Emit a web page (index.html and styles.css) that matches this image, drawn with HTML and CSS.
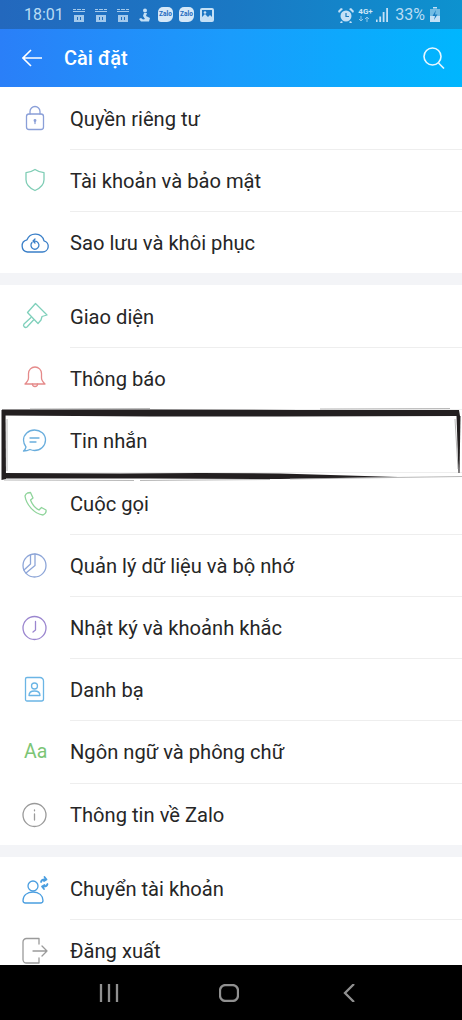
FILE: index.html
```html
<!DOCTYPE html>
<html lang="vi">
<head>
    <meta charset="UTF-8">
    <title>Cài đặt</title>
    <link rel="stylesheet" href="styles.css">
</head>
<body>
<div class="page">
    <div class="statusbar">
        <div class="status-left">
            <span class="clock">18:01</span>
            <svg class="st st-msg" viewBox="0 0 12 14"><path d="M0 1h3v1H0zM4 1h4v1H4zM9 1h3v1H9zM0 3h12v1H0z" opacity=".8"/><path fill-rule="evenodd" d="M1 7h10v7H1zm3 2v3h1V9zm3 0v3h1V9z" opacity=".8"/></svg>
            <svg class="st st-msg" viewBox="0 0 12 14"><path d="M0 1h3v1H0zM4 1h4v1H4zM9 1h3v1H9zM0 3h12v1H0z" opacity=".8"/><path fill-rule="evenodd" d="M1 7h10v7H1zm3 2v3h1V9zm3 0v3h1V9z" opacity=".8"/></svg>
            <svg class="st st-msg" viewBox="0 0 12 14"><path d="M0 1h3v1H0zM4 1h4v1H4zM9 1h3v1H9zM0 3h12v1H0z" opacity=".8"/><path fill-rule="evenodd" d="M1 7h10v7H1zm3 2v3h1V9zm3 0v3h1V9z" opacity=".8"/></svg>
            <svg class="st st-anchor" viewBox="0 0 11 14"><circle cx="6" cy="2.500" r="2"/><path d="M5 5h3L7 8l4 2-1 3.500H2L0 11l2-1 2 1.500L6 11 4 8z"/></svg>
            <span class="zalo">Zalo</span>
            <span class="zalo">Zalo</span>
            <svg class="st st-pic" viewBox="0 0 14 14"><path fill-rule="evenodd" d="M2 0h10a2 2 0 0 1 2 2v10a2 2 0 0 1-2 2H2a2 2 0 0 1-2-2V2a2 2 0 0 1 2-2zm0 2v7l3-3 3 3 2-2 2 2V2z"/><circle cx="5" cy="4.500" r="1.300"/></svg>
        </div>
        <div class="status-right">
            <svg class="st st-alarm" viewBox="0 0 16 16"><circle cx="8" cy="9" r="5.500"/><path d="M0 4l3-3 2 1-4 4zM16 4l-3-3-2 1 4 4zM3 14l-1 2h2l1-1zM13 14l1 2h-2l-1-1z"/><path d="M8 6v3.500h3" fill="none" stroke="#1a7cc0" stroke-width="1.200"/></svg>
            <span class="net">4G+<svg viewBox="0 0 12 6"><path d="M3 0v5M1 3l2 2 2-2M9 6V1M7 3l2-2 2 2" fill="none" stroke="#8fc8ea" stroke-width="1"/></svg></span>
            <svg class="st st-signal" viewBox="0 0 12 14"><path d="M0 11.500h1.600V14H0zM3.300 8.500h1.800V14H3.300zM6.700 4h1.800v10H6.700zM10.200 0H12v14h-1.800z"/></svg>
            <span class="pct">33%</span>
            <svg class="st st-batt" viewBox="0 0 10 15"><path d="M3 0h4v1.500H3z"/><path d="M0 2h10v13H0z" opacity=".55"/><path d="M0 9h10v6H0z"/><path d="M6 3L2.500 9H5l-1 4 3.500-5.500H5z" fill="#1a7cc0"/></svg>
        </div>
    </div>

    <header class="topbar">
        <svg class="back" viewBox="0 0 20 18"><path d="M20 9H1M9 1L1 9l8 8"/></svg>
        <h1 class="title">Cài đặt</h1>
        <svg class="search" viewBox="0 0 22 22"><circle cx="9.500" cy="9.500" r="8.500"/><path d="M15.500 16l5.500 5.500"/></svg>
    </header>

    <main class="list">
        <section class="group">
            <div class="row">
                <svg class="ico c-lock" viewBox="0 0 32 32"><rect x="7.500" y="11" width="17" height="15.500" rx="2.500"/><path d="M11 11V8.500a5 5 0 0 1 10 0V11"/><path d="M16 17.500v3"/><circle cx="16" cy="17.500" r=".8"/></svg>
                <div class="label">Quyền riêng tư</div>
            </div>
            <div class="row">
                <svg class="ico c-shield" viewBox="0 0 32 32"><path d="M16 4.500c3 2 6 3 9 3.200v7c0 5-4 8.500-9 10.800-5-2.300-9-5.800-9-10.800v-7c3-.2 6-1.200 9-3.200z"/></svg>
                <div class="label">Tài khoản và bảo mật</div>
            </div>
            <div class="row">
                <svg class="ico c-cloud" viewBox="0 0 32 32"><path d="M8.500 25h15a5.700 5.700 0 0 0 1.500-11.200A9 9 0 0 0 8 12.800 6.200 6.200 0 0 0 8.500 25z"/><path d="M13 15.500a4 4 0 1 0 3-1.300h-1.500M16 12l-2 2 2 2"/></svg>
                <div class="label">Sao lưu và khôi phục</div>
            </div>
        </section>
        <section class="group">
            <div class="row">
                <svg class="ico c-brush" viewBox="0 0 32 32"><path d="M16.500 2.500L28 14l-5 1.500-1 3.500-3 3.500L8.500 11.500z"/><path d="M12 16.500l-7 6.500c-1.500 2 1 4.500 3 3l6.500-7"/></svg>
                <div class="label">Giao diện</div>
            </div>
            <div class="row">
                <svg class="ico c-bell" viewBox="0 0 32 32"><path d="M16 4a6.500 6.500 0 0 0-6.500 6.500V15c0 2-1.500 4-3.500 6h20c-2-2-3.500-4-3.500-6v-4.500A6.500 6.500 0 0 0 16 4z"/><path d="M13.500 21a2.500 2.500 0 0 0 5 0"/></svg>
                <div class="label">Thông báo</div>
            </div>
            <div class="row">
                <svg class="ico c-chat" viewBox="0 0 32 32"><path d="M15.500 5C9.500 5 4.500 9.500 4.500 15c0 3 1 5 2.500 7-.3 1.500-1.200 3-2.500 4 2.500 0 4.500-.5 6.500-1.500 1.500.6 3 1 4.500 1 6 0 11-4.500 11-10.500S21.500 5 15.500 5z"/><path d="M11 13h9M11 17h6"/></svg>
                <div class="label">Tin nhắn</div>
            </div>
            <div class="row">
                <svg class="ico c-phone" viewBox="0 0 32 32"><path d="M8.500 5l3-.5L14 10l-2.500 2c1.500 4 4.500 8 8.500 10l2.500-2.500L27 22c.5 2-1 4-3 5C15 26 7 16 6 8c.5-1.500 1.500-2.500 2.500-3z"/></svg>
                <div class="label">Cuộc gọi</div>
            </div>
            <div class="row">
                <svg class="ico c-pie" viewBox="0 0 32 32"><circle cx="15.500" cy="15.500" r="11.500"/><path d="M16 4v11.500L7 23M11.500 5v9L5 20"/></svg>
                <div class="label">Quản lý dữ liệu và bộ nhớ</div>
            </div>
            <div class="row">
                <svg class="ico c-clock" viewBox="0 0 32 32"><circle cx="15.500" cy="16" r="11.500"/><path d="M16.500 9.500V18l-2.500 2"/></svg>
                <div class="label">Nhật ký và khoảnh khắc</div>
            </div>
            <div class="row">
                <svg class="ico c-contact" viewBox="0 0 32 32"><path d="M8 3.500h13a3.500 3.500 0 0 1 3.500 3.500v18a2 2 0 0 1-2 2H8a1.500 1.500 0 0 1-1.500-1.500V5A1.500 1.500 0 0 1 8 3.500z"/><circle cx="15.500" cy="12" r="3"/><path d="M10 21.500c0-3 2-4.500 5.500-4.500s5.500 1.500 5.500 4.500z"/></svg>
                <div class="label">Danh bạ</div>
            </div>
            <div class="row">
                <span class="ico-aa">Aa</span>
                <div class="label">Ngôn ngữ và phông chữ</div>
            </div>
            <div class="row">
                <svg class="ico c-info" viewBox="0 0 32 32"><circle cx="15.500" cy="16" r="11.500"/><path d="M15.500 15v6M15.500 11v.8"/></svg>
                <div class="label">Thông tin về Zalo</div>
            </div>
        </section>
        <section class="group">
            <div class="row">
                <svg class="ico c-switch" viewBox="0 0 32 32"><circle cx="14" cy="13" r="5"/><path d="M6.500 30a2.500 2.500 0 0 1-2.500-2.500c0-5 4-8.500 10-8.500s10 3.500 10 8.500a2.500 2.500 0 0 1-2.500 2.500z"/><path class="thick" d="M22 9c.5-2 2-3 5-2.500M25.500 4l2 2.500-2.500 1.500M28.500 11c-.5 2-2 3-5 2.500M25 16l-2-2.500 2.500-1.500"/></svg>
                <div class="label">Chuyển tài khoản</div>
            </div>
            <div class="row">
                <svg class="ico c-logout" viewBox="0 0 32 32"><path d="M20 3.500H7.500A3.500 3.500 0 0 0 4 7v17.500A3.500 3.500 0 0 0 7.500 28H20v-5M20 9V3.500"/><path d="M14 16h14M23 11l5 5-5 5"/></svg>
                <div class="label">Đăng xuất</div>
            </div>
        </section>

        <svg class="scribble" viewBox="0 0 462 76">
            <path class="ink" d="M2 2.500L150 2.500 300 3 459 3 460 9 280 9.500 150 9.500 2 8.500z"/>
            <path class="ink" d="M1.500 3L5.500 3 6 72 1.500 73z"/>
            <path class="ink" d="M2 66L120 66.500 200 66 280 66.500 398 70 280 72 150 71.500 2 71.500z"/>
            <path class="ink" d="M456.500 9L460.500 9 459.500 66 458.500 66z"/>
            <path class="rough" d="M30 2L150 1.500M320 2l130-.5M4 73l130 .5M140 73.500l130-1M290 72L462 69.500M7 12v52M455 12l3 50"/>
        </svg>
    </main>

    <nav class="navbar">
        <svg class="nav-ico" viewBox="0 0 20 18"><path d="M2 0v18M10 0v18M18 0v18"/></svg>
        <svg class="nav-ico" viewBox="0 0 20 18"><rect x="1" y="1" width="18" height="16" rx="5.500"/></svg>
        <svg class="nav-ico" viewBox="0 0 20 18"><path d="M15 0L6 9l9 9"/></svg>
    </nav>
</div>
</body>
</html>
```

FILE: styles.css
```css
html, body {
    margin: 0;
    padding: 0;
}
body {
    font-family: Roboto, "Noto Sans", sans-serif;
    background: #fff;
}
.page {
    width: 462px;
    height: 1020px;
    display: flex;
    flex-direction: column;
    overflow: hidden;
}

/* status bar */
.statusbar {
    height: 29px;
    flex: none;
    display: flex;
    justify-content: space-between;
    align-items: center;
    padding: 0 22px 0 24px;
    background: linear-gradient(90deg, #2368bd, #1a78c4 50%, #0d92cf);
    color: #b9dcf4;
}
.status-left, .status-right {
    display: flex;
    align-items: center;
}
.clock {
    font-size: 16px;
    width: 49px;
}
.st {
    fill: #c4e0f6;
    display: block;
    flex: none;
}
.st-msg {
    width: 12px;
    height: 14px;
    margin-right: 10px;
}
.st-anchor {
    width: 11px;
    height: 14px;
    margin-right: 8px;
}
.zalo {
    width: 15px;
    height: 15px;
    margin-right: 6px;
    border-radius: 5px 5px 6px 3px;
    background: #d5e8f8;
    color: #2368bd;
    font-size: 6.500px;
    font-weight: 700;
    line-height: 15px;
    text-align: center;
}
.st-pic {
    width: 14px;
    height: 14px;
}
.st-alarm {
    width: 16px;
    height: 16px;
    margin-right: 4px;
}
.net {
    width: 15px;
    margin-right: 3px;
    font-size: 8px;
    font-weight: 700;
    line-height: 8px;
    color: #cfe8f8;
}
.net svg {
    display: block;
    width: 12px;
    height: 6px;
}
.st-signal {
    width: 12px;
    height: 14px;
    margin-right: 7px;
}
.pct {
    font-size: 16px;
    margin-right: 5px;
}
.st-batt {
    width: 10px;
    height: 15px;
}

/* header */
.topbar {
    height: 58px;
    flex: none;
    display: flex;
    align-items: center;
    padding: 0 17px 0 22px;
    background: linear-gradient(90deg, #2a7ff8, #1a9cfc 50%, #00b6fe);
}
.back {
    width: 20px;
    height: 18px;
    fill: none;
    stroke: #fff;
    stroke-width: 1.6;
}
.title {
    flex: 1;
    margin: 0 0 0 22px;
    color: #fff;
    font-size: 20px;
    font-weight: 500;
}
.search {
    width: 22px;
    height: 22px;
    fill: none;
    stroke: #e8f7ff;
    stroke-width: 1.6;
}

/* list */
.list {
    flex: 1;
    min-height: 0;
    overflow: hidden;
    position: relative;
    background: #f3f4f7;
}
.group {
    background: #fff;
    margin-bottom: 12px;
}
.row {
    height: 62.200px;
    display: flex;
    align-items: stretch;
}
.group:first-child .row {
    height: 62px;
}
.ico {
    width: 32px;
    height: 32px;
    flex: none;
    align-self: center;
    margin: 2px 19px 0;
    fill: none;
    stroke-width: 1.300;
    stroke-linejoin: round;
    stroke-linecap: round;
}
.ico-aa {
    width: 70px;
    flex: none;
    align-self: center;
    padding-left: 24px;
    box-sizing: border-box;
    color: #7cc576;
    font-size: 19.500px;
    margin-top: 1px;
}
.label {
    flex: 1;
    display: flex;
    align-items: center;
    padding-top: 2px;
    font-size: 20.150px;
    color: #262626;
    box-shadow: 0 1px 0 #eee;
}
.row:last-child .label {
    box-shadow: none;
}
.c-lock { stroke: #8a9fd8; }
.c-shield { stroke: #7fcdb5; }
.c-cloud { stroke: #3a7fc8; }
.c-brush { stroke: #7fd0bb; }
.c-bell { stroke: #e58a8a; }
.c-chat { stroke: #6aaedd; }
.c-phone { stroke: #8fd49b; }
.c-pie { stroke: #8ea6d8; }
.c-clock { stroke: #9b86cf; }
.c-contact { stroke: #6bb5e5; }
.c-info { stroke: #9a9a9a; }
.c-switch { stroke: #4a9ee0; }
.c-switch .thick { stroke-width: 1.800; }
.c-logout { stroke: #9a9a9a; }

/* hand drawn frame over the Tin nhan row */
.scribble {
    position: absolute;
    left: 0;
    top: 320px;
    width: 462px;
    height: 76px;
}
.ink {
    fill: #231f20;
}
.rough {
    fill: none;
    stroke: #9a9a9a;
    stroke-width: 1;
    opacity: .7;
}

/* nav bar */
.navbar {
    height: 55px;
    flex: none;
    display: grid;
    grid-template-columns: repeat(3, 120px);
    justify-content: center;
    justify-items: center;
    align-items: center;
    padding-right: 4px;
    background: #000;
}
.nav-ico {
    width: 20px;
    height: 18px;
    fill: none;
    stroke: #909090;
    stroke-width: 2.300;
}
```
